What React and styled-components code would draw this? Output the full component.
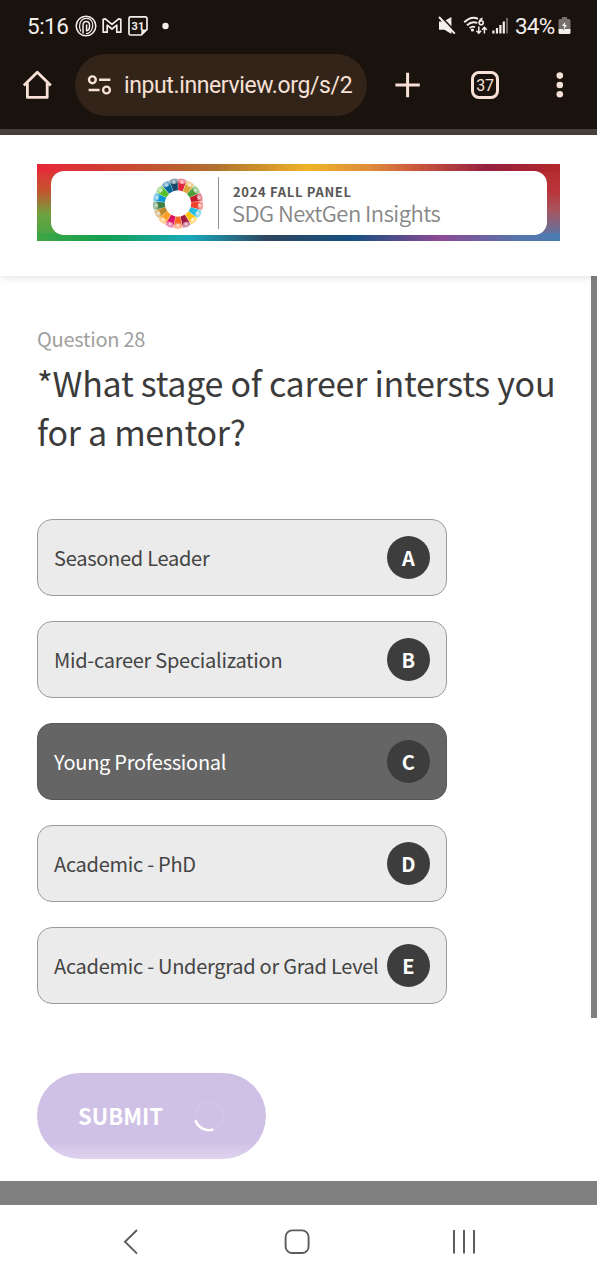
// Import React Libraries
import React from 'react';

// Import Style
import styled, { createGlobalStyle, css } from 'styled-components';

const colors = {
    chrome: '#1a120d',
    chromePill: '#33241a',
    chromeIcon: '#f7e0d6',
    status: '#f2efec',
    text: '#3b3b3b',
    muted: '#a0a0a0',
    option: '#ebebeb',
    optionBorder: '#9b9b9b',
    selected: '#656565',
    badge: '#3d3d3d',
    submit: '#cfc1e5',
    grey: '#808080',
}

const surveyFont = `'Noto Sans CJK SC', 'Open Sans', sans-serif`;

// One color per goal, clockwise from the top
const goals = [
    '#e5243b', '#dda63a', '#4c9f38', '#c5192d', '#ef402b', '#26bde2', '#fcc30b', '#a21942', '#fd6925',
    '#dd1367', '#fd9d24', '#bf8b2e', '#3f7e44', '#0a97d9', '#56c02b', '#00689d', '#19486a',
];

const options = [
    { letter: 'A', label: 'Seasoned Leader' },
    { letter: 'B', label: 'Mid-career Specialization' },
    { letter: 'C', label: 'Young Professional', selected: true },
    { letter: 'D', label: 'Academic - PhD' },
    { letter: 'E', label: 'Academic - Undergrad or Grad Level' },
];

const GlobalStyle = createGlobalStyle`
    * {
        box-sizing: border-box;
    }

    body {
        margin: 0;
        background: white;
        overflow: hidden;
    }
`

const Screen = styled.div`
    display: flex;
    flex-direction: column;
    width: 597px;
    height: 1280px;
    background: white;
    font-family: ${surveyFont};
`

const StatusBar = styled.div`
    display: flex;
    align-items: center;
    justify-content: space-between;
    height: 52px;
    padding: 0 26px 0 27px;
    background: ${colors.chrome};
    color: ${colors.status};
    font-family: Roboto, sans-serif;
    font-size: 22.5px;
`

const StatusGroup = styled.div`
    display: flex;
    align-items: center;
    height: 52px;
`

const Clock = styled.span`
    width: 48px;
    letter-spacing: -0.5px;
    white-space: nowrap;
`

const Battery = styled.span`
    width: 43px;
    letter-spacing: -0.8px;
    white-space: nowrap;
`

const BrowserBar = styled.div`
    display: flex;
    align-items: flex-start;
    height: 83px;
    padding: 2px 0 0 22px;
    background: ${colors.chrome};
    border-bottom: 6px solid #48423d;
    color: ${colors.chromeIcon};
    font-family: Roboto, sans-serif;
`

const BarIcon = styled.div`
    display: flex;
    align-items: center;
    justify-content: center;
    width: ${props => props.$width}px;
    height: 62px;
    margin-left: ${props => props.$gap || 0}px;
`

const AddressPill = styled.div`
    display: flex;
    align-items: center;
    width: 292px;
    height: 62px;
    margin-left: 23px;
    padding-left: 12px;
    border-radius: 31px;
    background: ${colors.chromePill};
`

const Address = styled.span`
    margin-left: 11px;
    font-size: 23px;
    letter-spacing: -0.38px;
    white-space: nowrap;
`

const TabCount = styled.div`
    display: flex;
    align-items: center;
    justify-content: center;
    width: 28px;
    height: 28px;
    border: 3px solid ${colors.chromeIcon};
    border-radius: 8px;
    font-size: 16px;
    letter-spacing: -0.3px;
`

const Header = styled.header`
    display: flex;
    align-items: flex-start;
    height: 141px;
    padding: 29px 37px 0;
    background: white;
    box-shadow: 0 1px 8px rgba(0, 0, 0, 0.13);
    z-index: 1;
`

const Banner = styled.div`
    width: 523px;
    height: 77px;
    padding: 7px 13px 6px 14px;
    background:
        linear-gradient(to right, #e8283a 0%, #d23c33 12%, #b0702e 34%, #efb428 52%, #de8a3c 64%, #cc5a3c 72%, #94203f 86%, #b5282a 100%) top / 100% 8px no-repeat,
        linear-gradient(to right, #3fa546 0%, #12a04e 13%, #1aa9bd 29%, #2e4560 44%, #154f80 60%, #8d4a95 77%, #5575ac 92%, #4a7bb2 100%) bottom / 100% 8px no-repeat,
        linear-gradient(to bottom, #e8283a 0%, #c4552f 35%, #6ea33f 65%, #3fa546 100%) left / 50% 100% no-repeat,
        linear-gradient(to bottom, #b5282a 0%, #b8353a 35%, #a8545e 60%, #4a7bb2 100%) right / 50% 100% no-repeat;
`

const BannerInner = styled.div`
    display: flex;
    align-items: center;
    height: 64px;
    padding-left: 101px;
    border-radius: 13px;
    background: white;
`

const BannerText = styled.div`
    display: flex;
    flex-direction: column;
    height: 52px;
    margin-left: 14px;
    padding: 5px 0 0 14px;
    border-left: 1px solid #909090;
`

const PanelName = styled.span`
    font-size: 13px;
    font-weight: 700;
    line-height: 20px;
    letter-spacing: 0.68px;
    color: #565656;
    white-space: nowrap;
`

const PanelTitle = styled.span`
    margin-left: -1px;
    font-size: 22px;
    font-weight: 350;
    line-height: 21px;
    letter-spacing: -0.52px;
    color: #868686;
    white-space: nowrap;
`

const Body = styled.main`
    display: flex;
    height: 905px;
`

const Survey = styled.section`
    flex: 1;
    padding: 50px 0 0 37px;
`

const ScrollThumb = styled.div`
    width: 6px;
    height: 742px;
    background: ${colors.grey};
`

const QuestionNumber = styled.div`
    height: 26px;
    font-size: 20px;
    line-height: 26px;
    letter-spacing: -0.27px;
    color: ${colors.muted};
`

const QuestionTitle = styled.h1`
    height: 98px;
    margin: 6px 0 63px;
    font-size: 34px;
    font-weight: 400;
    line-height: 49px;
    letter-spacing: -0.28px;
    color: ${colors.text};
    white-space: nowrap;
`

const OptionList = styled.div`
    display: flex;
    flex-direction: column;
    gap: 25px;
`

const Option = styled.div`
    display: flex;
    align-items: center;
    justify-content: space-between;
    width: 410px;
    height: 77px;
    padding: 0 16px;
    border: 1.4px solid ${colors.optionBorder};
    border-radius: 15px;
    background: ${colors.option};
    color: #444444;
    font-size: 20px;
    letter-spacing: -0.27px;
    white-space: nowrap;

    ${props => props.$selected && css`
        border-color: #575757;
        background: ${colors.selected};
        color: white;
    `}
`

const Letter = styled.span`
    display: flex;
    align-items: center;
    justify-content: center;
    flex-shrink: 0;
    width: 43.4px;
    height: 43.4px;
    border-radius: 50%;
    background: ${colors.badge};
    color: white;
    font-size: 20px;
    font-weight: 700;
    letter-spacing: 0;
`

const SubmitButton = styled.button`
    display: flex;
    align-items: center;
    width: 229px;
    height: 86px;
    margin-top: 69px;
    padding: 0 0 0 41px;
    border: none;
    border-radius: 43px;
    background: linear-gradient(to bottom, ${colors.submit} 80%, #ded3ee 100%);
    color: white;
    font-family: ${surveyFont};
    font-size: 22px;
    font-weight: 700;
`

const SubmitLabel = styled.span`
    width: 115px;
    padding-bottom: 2px;
    text-align: left;
`

const GreyStrip = styled.div`
    height: 24px;
    background: ${colors.grey};
`

const NavBar = styled.nav`
    display: flex;
    justify-content: space-between;
    padding: 23px 119px 0 121px;
    height: 75px;
    background: white;
`

function NotificationIcons() {
    return (
        <svg width="98" height="26" viewBox="75 13 98 26" fill="none" stroke={colors.status} strokeWidth="1.7">
            <circle cx="86" cy="26" r="9.8" strokeWidth="1.5" />
            <path d="M83 33.6V25.6C83 22.8 84.2 21.4 86.3 21.4S89.6 22.8 89.6 25.6C89.6 29.2 88.6 30.8 86.6 30.8V24.6" strokeWidth="1.5" />
            <path d="M80.8 31.4C78 24.6 80.6 18.3 86.3 18.3S94.2 24 91.6 29.8C90.4 32.4 88.5 33.6 86 33.6" strokeWidth="1.2" />
            <path d="M103.2 32.2V19.3L105.3 18.8L112 24.4L118.7 18.8L120.8 19.3V32.2H116.8V25.2L112 29L107.2 25.2V32.2Z" strokeLinejoin="round" />
            <path d="M130.5 16.8H145.2Q147 16.8 147 18.6V29.5L141.4 35H130.5Q129 35 129 33.5V18.4Q129 16.8 130.5 16.8Z" strokeLinejoin="round" />
            <path d="M141.3 35V29.5H147Z" fill={colors.status} stroke="none" />
            <text x="137.9" y="30" fill={colors.status} stroke="none" fontFamily="Roboto, sans-serif" fontSize="11" fontWeight="700" textAnchor="middle">31</text>
            <circle cx="165.5" cy="26" r="3.2" fill={colors.status} stroke="none" />
        </svg>
    )
}

function SignalIcons() {
    return (
        <svg width="77" height="26" viewBox="438 13 77 26" fill="none" stroke={colors.status}>
            <path d="M439 21.6H443.4L451.4 17V34L444.5 29.8H439Z" fill={colors.status} stroke="none" />
            <path d="M440.4 16.2L456 32.4" stroke={colors.chrome} strokeWidth="1.8" />
            <path d="M439 17L454.8 33.6" strokeWidth="2" />
            <path d="M464.2 22.2Q471.5 15.4 478 18.8M467 25.2Q472 20.6 477.4 23M469.6 28Q472.4 25.8 475 27.2" strokeWidth="1.9" />
            <circle cx="472.4" cy="30" r="1.6" fill={colors.status} stroke="none" />
            <path d="M482.6 18.2Q479.4 19.4 479.4 22.4" strokeWidth="1.6" />
            <circle cx="481.2" cy="22.8" r="2" strokeWidth="1.6" />
            <path d="M478.8 26.6V33M476.4 30.8L478.8 33.2L481.2 30.8M484.4 33.6V27.6M482 29.8L484.4 27.4L486.8 29.8" strokeWidth="1.5" />
            <path d="M493.4 33.4V30.4M497 33.4V28M500.4 33.4V25M503.8 33.4V21.6" strokeWidth="2.2" />
            <path d="M507 33.4V18" stroke="#6a645f" strokeWidth="2" />
        </svg>
    )
}

function BatteryIcon() {
    return (
        <svg width="13" height="18" viewBox="0 0 13 18">
            <path d="M4 0H9V2H11Q12.5 2 12.5 3.5V12H0.5V3.5Q0.5 2 2 2H4Z" fill="#77716c" />
            <path d="M0.5 12H12.5V15.5Q12.5 17 11 17H2Q0.5 17 0.5 15.5Z" fill={colors.status} />
            <path d="M7.6 4L3.4 9.2H6L5.2 13.4L9.6 7.8H7Z" fill="white" stroke={colors.chrome} strokeWidth="0.3" />
        </svg>
    )
}

function HomeIcon() {
    return (
        <svg width="30" height="30" viewBox="0 0 30 30" fill="none" stroke={colors.chromeIcon} strokeWidth="2.8" strokeLinejoin="round">
            <path d="M1.8 15.4L15.3 2.2L28.8 15.4M5.4 13V27.4H25.2V13" />
        </svg>
    )
}

function SiteInfoIcon() {
    return (
        <svg width="26" height="20" viewBox="0 0 26 20" fill="none" stroke={colors.chromeIcon} strokeWidth="2.4">
            <circle cx="5.4" cy="4.8" r="3.4" />
            <circle cx="19.5" cy="15" r="3.4" />
            <path d="M12 4.8H23.4M1.6 15H12.6" />
        </svg>
    )
}

function GoalsWheel() {
    const step = 360 / goals.length;

    return (
        <svg width="52" height="52" viewBox="-26 -26.5 52 52">
            {goals.map((color, i) => (
                <g key={color} transform={`rotate(${(i + 0.5) * step})`}>
                    <path d="M-2.2 -13L-4.3 -24.2Q0 -26.2 4.3 -24.2L2.2 -13Q0 -13.4 -2.2 -13Z" fill={color} opacity="0.5" />
                    <path d="M-2.2 -13L-3.8 -22.4L-2 -20H2L3.8 -22.4L2.2 -13Q0 -13.4 -2.2 -13Z" fill={color} />
                    <ellipse cx="0" cy="-22" rx="1.3" ry="1.7" fill="white" opacity="0.5" />
                </g>
            ))}
        </svg>
    )
}

function Spinner() {
    return (
        <svg width="32" height="32" viewBox="-16 -16 32 32" fill="none" strokeWidth="2.6">
            <circle r="14.2" stroke="#d1c4e6" />
            <path d="M-13.5 4.4A14.2 14.2 0 0 0 4.4 13.5" stroke="white" />
        </svg>
    )
}

function App() {

    return (
        <Screen>
            <GlobalStyle />

            <StatusBar>
                <StatusGroup>
                    <Clock>5:16</Clock>
                    <NotificationIcons />
                </StatusGroup>
                <StatusGroup>
                    <SignalIcons />
                    <Battery>34%</Battery>
                    <BatteryIcon />
                </StatusGroup>
            </StatusBar>

            <BrowserBar>
                <BarIcon $width={30}><HomeIcon /></BarIcon>
                <AddressPill>
                    <SiteInfoIcon />
                    <Address>input.innerview.org/s/2</Address>
                </AddressPill>
                <BarIcon $width={26} $gap={28}>
                    <svg width="26" height="26" viewBox="0 0 26 26" stroke={colors.chromeIcon} strokeWidth="3">
                        <path d="M0.4 13H24.8M12.6 0.8V25.2" />
                    </svg>
                </BarIcon>
                <BarIcon $width={28} $gap={50}>
                    <TabCount>37</TabCount>
                </BarIcon>
                <BarIcon $width={8} $gap={57}>
                    <svg width="8" height="28" viewBox="0 0 8 28" fill={colors.chromeIcon}>
                        <circle cx="3.8" cy="4.6" r="3.3" />
                        <circle cx="3.8" cy="14" r="3.3" />
                        <circle cx="3.8" cy="23.2" r="3.3" />
                    </svg>
                </BarIcon>
            </BrowserBar>

            <Header>
                <Banner>
                    <BannerInner>
                        <GoalsWheel />
                        <BannerText>
                            <PanelName>2024 FALL PANEL</PanelName>
                            <PanelTitle>SDG NextGen Insights</PanelTitle>
                        </BannerText>
                    </BannerInner>
                </Banner>
            </Header>

            <Body>
                <Survey>
                    <QuestionNumber>Question 28</QuestionNumber>
                    <QuestionTitle>
                        *What stage of career intersts you
                        <br />
                        for a mentor?
                    </QuestionTitle>
                    <OptionList>
                        {options.map(option => (
                            <Option key={option.letter} $selected={option.selected}>
                                {option.label}
                                <Letter>{option.letter}</Letter>
                            </Option>
                        ))}
                    </OptionList>
                    <SubmitButton>
                        <SubmitLabel>SUBMIT</SubmitLabel>
                        <Spinner />
                    </SubmitButton>
                </Survey>
                <ScrollThumb />
            </Body>

            <GreyStrip />
            <NavBar>
                <svg width="20" height="28" viewBox="0 0 20 28" fill="none" stroke="#5c5c5c" strokeWidth="1.9">
                    <path d="M16 2L4 13.8L16 25.6" />
                </svg>
                <svg width="26" height="28" viewBox="0 0 26 28" fill="none" stroke="#5c5c5c" strokeWidth="1.9">
                    <rect x="1.6" y="2.4" width="23" height="22.6" rx="6.5" />
                </svg>
                <svg width="26" height="28" viewBox="0 0 26 28" fill="none" stroke="#5c5c5c" strokeWidth="2">
                    <path d="M2 2V25.4M12 2V25.4M22 2V25.4" />
                </svg>
            </NavBar>
        </Screen>
    )
}

export default App;
